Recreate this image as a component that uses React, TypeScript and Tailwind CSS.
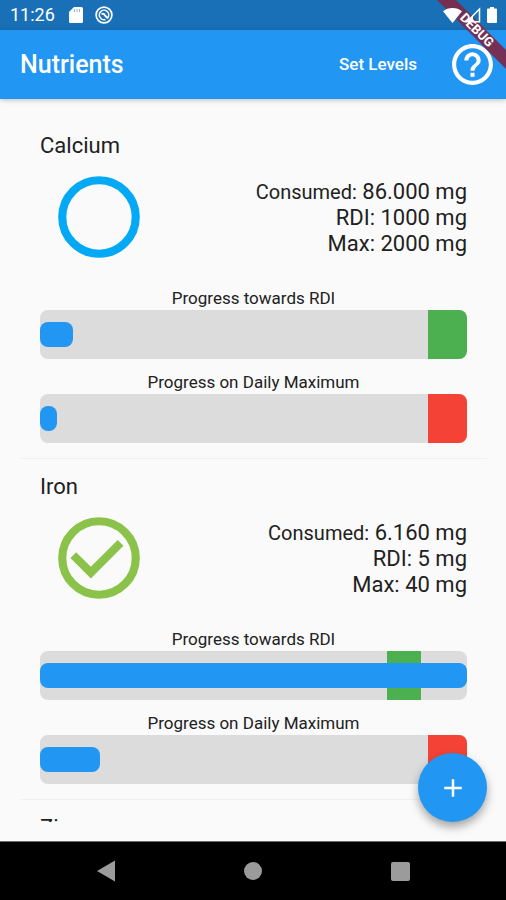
import { MdAdd, MdHelpOutline } from 'react-icons/md';

interface Nutrient {
  name: string;
  consumed: number;
  rdi: number;
  max: number;
}

const NUTRIENTS: Nutrient[] = [
  { name: 'Calcium', consumed: 86, rdi: 1000, max: 2000 },
  { name: 'Iron', consumed: 6.16, rdi: 5, max: 40 },
  { name: 'Zinc', consumed: 0, rdi: 10, max: 40 },
];

function StatusBar() {
  return (
    <div className="flex h-[30px] shrink-0 items-center bg-[#1a70b7] pr-[9px] pl-[10px] text-white">
      <span className="text-[18px] leading-5">11:26</span>
      <svg className="ml-[14px] h-4 w-[14px]" viewBox="0 0 14 16" fill="currentColor">
        <path d="M5 0h7.500q1.500 0 1.500 1.500v13q0 1.500-1.500 1.500h-11Q0 16 0 14.500V5z" />
        <path d="M5.500 2v3M8 2v3M10.500 2v3" stroke="#1a70b7" strokeWidth="1" opacity="0.5" />
      </svg>
      <svg className="ml-3 h-[18px] w-[18px]" viewBox="0 0 18 18" fill="none" stroke="currentColor">
        <circle cx="9" cy="9" r="7.900" strokeWidth="1.700" />
        <path d="M5.700 12.300a4.700 4.700 0 1 1 6.800-.2" strokeWidth="1.600" />
        <path d="M5.500 12.300a4.800 4.800 0 0 0 5 1.200" strokeWidth="1.400" />
        <path d="M6.500 8q2.500-1 3.500 1.500l2.800 2.800" strokeWidth="2" />
      </svg>
      {/* signal icons stay above the debug ribbon */}
      <div className="relative z-30 ml-auto flex items-center">
        <svg className="h-[15px] w-[19px]" viewBox="0 0 19 15" fill="currentColor">
          <path d="M9.500 15L0 3.300C2.500 1.200 5.800 0 9.500 0S16.500 1.200 19 3.300z" />
        </svg>
        <svg className="ml-[3px] h-4 w-4" viewBox="0 0 16 16" fill="none" stroke="currentColor">
          <path d="M14.500 2v12.800H2z" strokeWidth="1.500" />
          <path d="M8 8.500V15H2z" fill="currentColor" stroke="none" />
        </svg>
        <svg className="ml-[6px] h-4 w-[10px]" viewBox="0 0 10 16" fill="currentColor">
          <path d="M3 0h4v1.600h2q1 0 1 1V15q0 1-1 1H1q-1 0-1-1V2.600q0-1 1-1h2z" />
        </svg>
      </div>
    </div>
  );
}

function DebugBanner() {
  return (
    <svg className="pointer-events-none absolute top-0 right-0 z-20 h-[72px] w-[72px]" viewBox="0 0 72 72">
      <path d="M3 0h19l50 50v19z" fill="#7a2a4a" fillOpacity="0.94" />
      <text
        x="43"
        y="30"
        transform="rotate(45 43 30)"
        textAnchor="middle"
        dominantBaseline="central"
        className="fill-white font-[Roboto,sans-serif] text-[13px] font-bold"
      >
        DEBUG
      </text>
    </svg>
  );
}

function AppBar() {
  return (
    <header className="relative z-10 flex h-[69px] shrink-0 items-center bg-[#2196f3] pr-[9px] pl-5 text-white shadow-[0_1px_5px_rgba(0,0,0,0.25)]">
      <h1 className="text-[25px] font-medium">Nutrients</h1>
      <button className="mr-[31px] ml-auto text-[17px] font-medium">Set Levels</button>
      <button aria-label="Help">
        <MdHelpOutline className="h-[49px] w-[49px]" />
      </button>
    </header>
  );
}

interface ProgressProps {
  label: string;
  value: number;
  target: number;
  kind: 'rdi' | 'max';
}

// The zone runs from the target to 10% above it, the track grows if the value goes past that
function ProgressBar({ label, value, target, kind }: ProgressProps) {
  const end = Math.max(value, target * 1.1);
  const fill = (value / end) * 100;
  const zoneStart = (target / end) * 100;
  const zoneWidth = ((target * 0.1) / end) * 100;

  return (
    <div>
      <p className="text-center text-[17px] leading-6">{label}</p>
      <div className="relative flex h-[49px] items-center overflow-hidden rounded-lg bg-[#dcdcdc]">
        <div
          className={`absolute inset-y-0 ${kind === 'rdi' ? 'bg-[#4caf50]' : 'bg-[#f44336]'}`}
          style={{ left: `${zoneStart}%`, width: `${zoneWidth}%` }}
        />
        <div className="relative h-[25px] rounded-lg bg-[#2196f3]" style={{ width: `${fill}%` }} />
      </div>
    </div>
  );
}

function StatusIcon({ done }: { done: boolean }) {
  return (
    <svg className={`h-[98px] w-[98px] ${done ? 'text-[#8bc34a]' : 'text-[#03a9f4]'}`} viewBox="0 0 24 24">
      <circle cx="12" cy="12" r="9" fill="none" stroke="currentColor" strokeWidth="2" />
      {done && <path d="M16.590 7.580L10 14.170l-3.590-3.580L5 12l5 5 8-8z" fill="currentColor" />}
    </svg>
  );
}

function NutrientItem({ nutrient }: { nutrient: Nutrient }) {
  const { name, consumed, rdi, max } = nutrient;
  return (
    <li className="border-b border-[#f0f0f0] px-5 py-[15px]">
      <h2 className="text-[22px] leading-[26px]">{name}</h2>
      <div className="mt-[9px] flex items-center justify-between pl-[10px]">
        <StatusIcon done={consumed >= rdi} />
        <div className="pt-0.5 text-right text-[22px] leading-[26px]">
          <p>
            <span className="text-[20px]">Consumed:</span> {consumed.toFixed(3)} mg
          </p>
          <p>RDI: {rdi} mg</p>
          <p>Max: {max} mg</p>
        </div>
      </div>
      <div className="mt-5 flex flex-col gap-[11px]">
        <ProgressBar label="Progress towards RDI" value={consumed} target={rdi} kind="rdi" />
        <ProgressBar label="Progress on Daily Maximum" value={consumed} target={max} kind="max" />
      </div>
    </li>
  );
}

function NavBar() {
  return (
    <nav className="grid h-[59px] shrink-0 grid-cols-3 border-t border-[#6b6b6b] bg-black px-8 text-[#9b9b9b]">
      <button aria-label="Back" className="flex items-center justify-center">
        <svg className="h-[22px] w-[18px]" viewBox="0 0 18 22" fill="currentColor">
          <path d="M18 0.500v21L0 11z" />
        </svg>
      </button>
      <button aria-label="Home" className="flex items-center justify-center">
        <span className="h-[18px] w-[18px] rounded-full bg-current" />
      </button>
      <button aria-label="Recents" className="flex items-center justify-center">
        <span className="h-[19px] w-[19px] rounded-xs bg-current" />
      </button>
    </nav>
  );
}

export default function App() {
  return (
    <div className="relative flex h-screen flex-col overflow-hidden bg-[#fafafa] font-[Roboto,sans-serif] text-[#212121]">
      <StatusBar />
      <AppBar />
      <DebugBanner />
      <main className="relative min-h-0 flex-1 py-[19px] pr-[19px] pl-5">
        <ul className="h-full overflow-y-auto [scrollbar-width:none]">
          {NUTRIENTS.map((n) => (
            <NutrientItem key={n.name} nutrient={n} />
          ))}
        </ul>
        <button
          aria-label="Add"
          className="absolute right-[19px] bottom-[19px] flex h-[69px] w-[69px] items-center justify-center rounded-full bg-[#2196f3] text-white shadow-[0_5px_10px_rgba(0,0,0,0.35)]"
        >
          <MdAdd className="h-[30px] w-[30px]" />
        </button>
      </main>
      <NavBar />
    </div>
  );
}
